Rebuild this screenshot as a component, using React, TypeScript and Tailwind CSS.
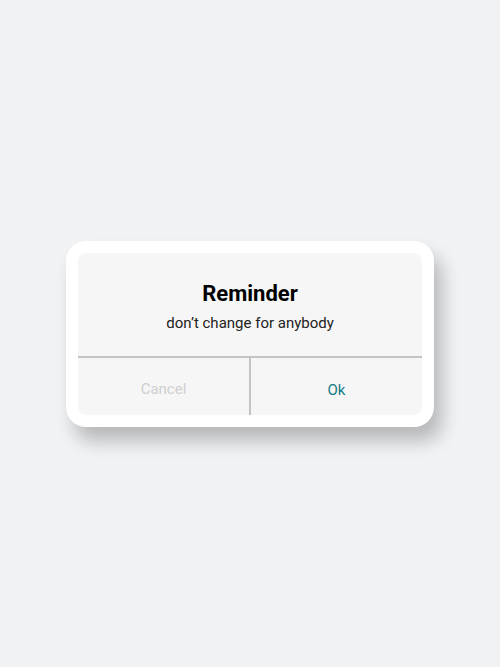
export default function App() {
  return (
    <div
      className="min-h-screen bg-[#f1f2f4] flex items-center justify-center"
      style={{ fontFamily: 'Roboto, "Liberation Sans", sans-serif' }}
    >
      <div className="w-[368px] h-[186px] rounded-[20px] bg-white p-3 shadow-[8px_14px_18px_rgba(0,0,0,0.24)]">
        <div className="h-full rounded-[8px] bg-[#f6f6f6] flex flex-col overflow-hidden">
          <div className="h-[105px] flex flex-col items-center pt-[27px] border-b-2 border-[#c3c3c3]">
            <h1 className="text-[22px] leading-[28px] font-bold text-black">Reminder</h1>
            <p className="mt-[5px] text-[15px] leading-[20px] text-[#222]">don’t change for anybody</p>
          </div>
          <div className="flex-1 flex">
            <button className="flex-1 flex items-center justify-center pt-[6px] text-[15px] text-[#cfcfcf]">
              Cancel
            </button>
            <div className="w-[2px] bg-[#c3c3c3]" />
            <button className="flex-1 flex items-center justify-center pt-[8px] text-[15px] text-[#137a86]">
              Ok
            </button>
          </div>
        </div>
      </div>
    </div>
  );
}
